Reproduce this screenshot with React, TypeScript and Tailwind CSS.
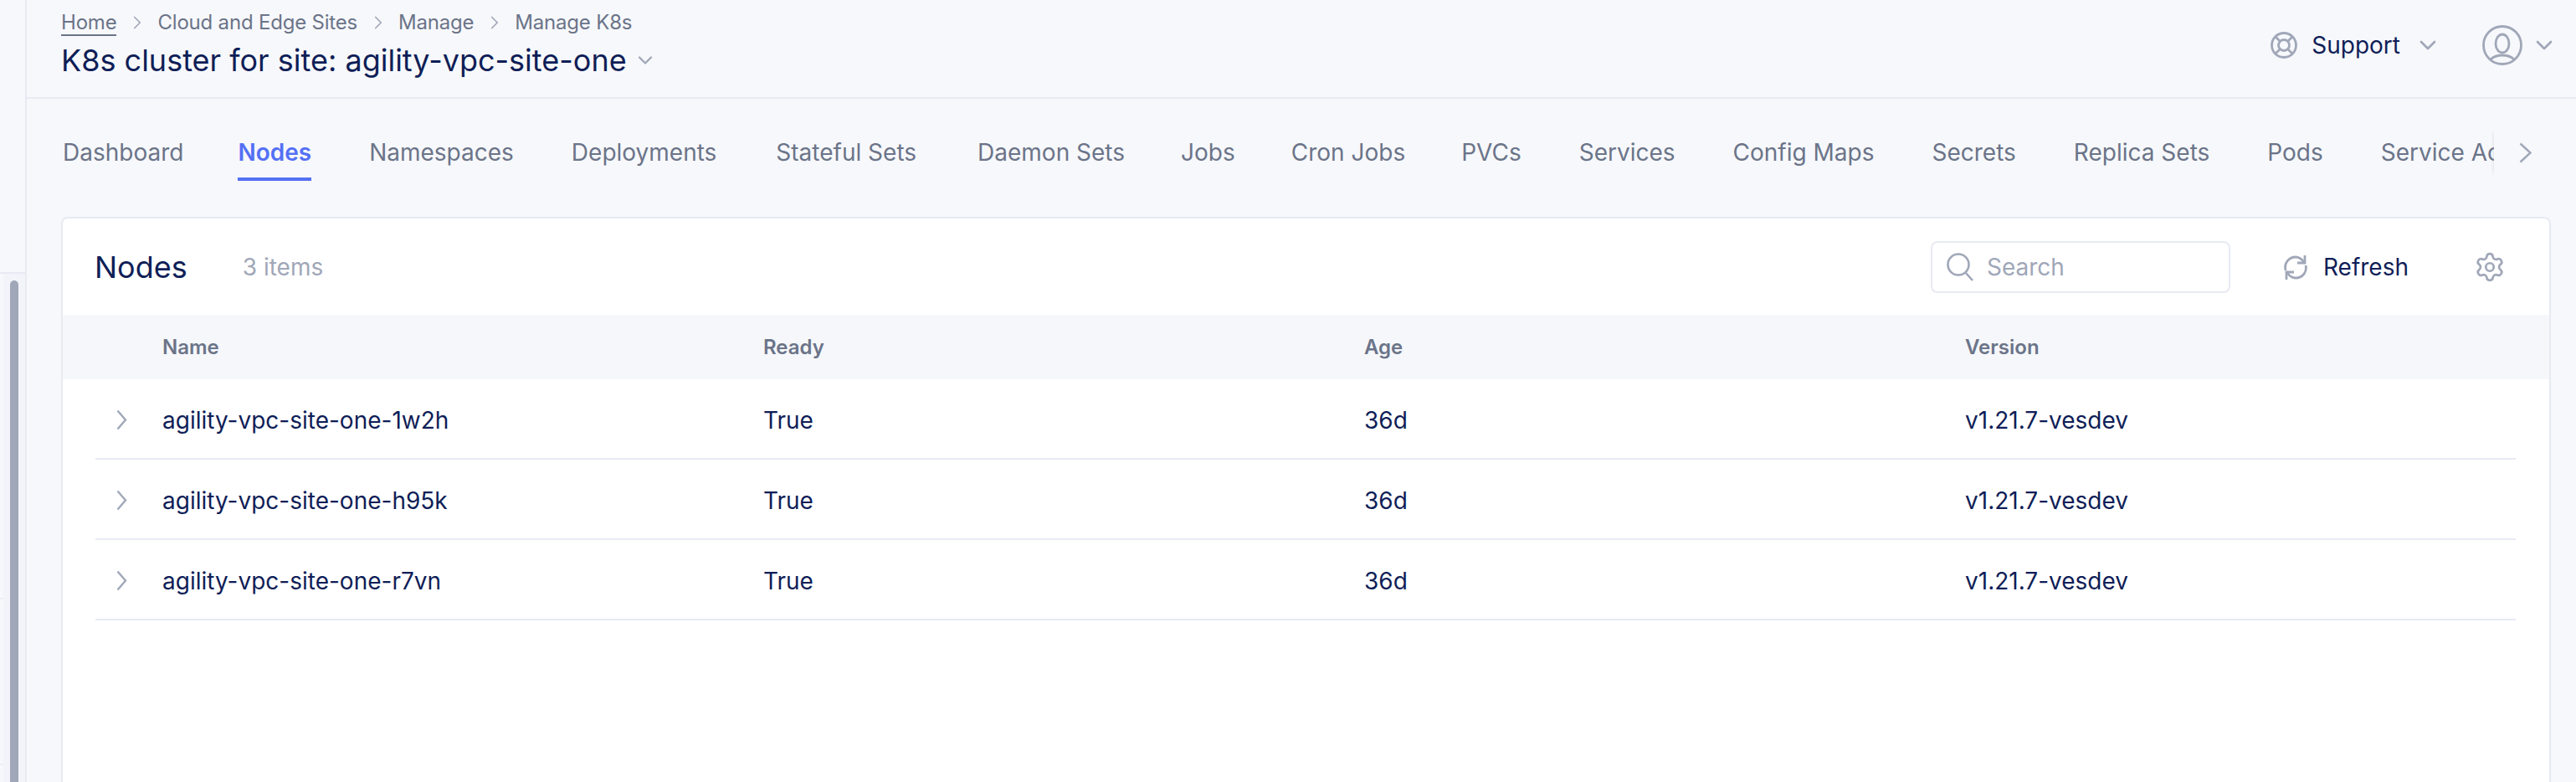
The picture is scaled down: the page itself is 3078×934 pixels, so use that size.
import React from "react";
import { ChevronDown, ChevronRight, Settings } from "lucide-react";

// spacing in the tab strip isn't even in the original, hence the per-tab nudges
const tabs = [
  { label: "Dashboard", nudge: "-mr-[4px]" },
  { label: "Nodes", nudge: "" },
  { label: "Namespaces", nudge: "" },
  { label: "Deployments", nudge: "" },
  { label: "Stateful Sets", nudge: "ml-[2px]" },
  { label: "Daemon Sets", nudge: "ml-[4px]" },
  { label: "Jobs", nudge: "-ml-[2px]" },
  { label: "Cron Jobs", nudge: "-ml-[2px]" },
  { label: "PVCs", nudge: "-ml-[2px]" },
  { label: "Services", nudge: "" },
  { label: "Config Maps", nudge: "" },
  { label: "Secrets", nudge: "" },
  { label: "Replica Sets", nudge: "" },
  { label: "Pods", nudge: "" },
  { label: "Service Accounts", nudge: "" },
];

const crumbs = ["Cloud and Edge Sites", "Manage", "Manage K8s"];

const nodes = ["agility-vpc-site-one-1w2h", "agility-vpc-site-one-h95k", "agility-vpc-site-one-r7vn"];

function Sidebar() {
  return (
    <aside className="w-[32px] shrink-0 h-full border-r-2 border-[#e8eaf3] flex flex-col">
      <div className="h-[327px] shrink-0 border-b-2 border-[#e8eaf3]" />
      <div className="flex-1 min-h-0 flex">
        <div className="w-[4px] shrink-0">
          <div className="h-[389px] border-b-2 border-[#eceef5]" />
          <div className="h-[198px] border-b-2 border-[#eceef5]" />
        </div>
        <div className="flex-1 bg-[#f3f4fa] pl-[8px] pt-[8px]">
          <div className="w-[10px] h-full rounded-t-full bg-[#a0a7b8]" />
        </div>
      </div>
    </aside>
  );
}

function Header() {
  return (
    <header className="h-[118px] shrink-0 border-b-2 border-[#e8eaf3] flex justify-between pl-[41px] pr-[22px]">
      <div className="pt-[11px]">
        <nav className="flex items-center text-[24px] leading-[32px] tracking-[-0.2px] text-[#6b7489]">
          <a className="border-b-2 border-[#6b7489] leading-[28px] mt-[2px]">Home</a>
          {crumbs.map((c) => (
            <React.Fragment key={c}>
              <ChevronRight className="w-[26px] h-[26px] mx-[11.5px] text-[#a0a7b8]" strokeWidth={1.6} />
              <span>{c}</span>
            </React.Fragment>
          ))}
        </nav>
        <div className="flex items-center mt-[5px]">
          <h1 className="text-[36px] leading-[48px] text-[#0f1e57]">K8s cluster for site: agility-vpc-site-one</h1>
          <ChevronDown className="w-[28px] h-[28px] ml-[8px] text-[#a0a7b8]" strokeWidth={2} />
        </div>
      </div>
      <div className="flex items-center pb-[8px]">
        <svg width="32" height="32" viewBox="0 0 32 32" fill="none" stroke="#a0a7b8" strokeWidth="2.8">
          <circle cx="16" cy="16" r="14.5" />
          <circle cx="16" cy="16" r="6.5" />
          <path d="M6 6l5.500 5.500M26 6l-5.500 5.500M6 26l5.500-5.500M26 26l-5.500-5.500" />
        </svg>
        <span className="text-[28px] leading-[40px] text-[#0f1e57] ml-[17px]">Support</span>
        <ChevronDown className="w-[32px] h-[32px] ml-[17px] text-[#a0a7b8]" strokeWidth={2} />
        <svg className="ml-[49px]" width="48" height="48" viewBox="0 0 48 48" fill="none" stroke="#a0a7b8" strokeWidth="2.8">
          <circle cx="24" cy="24" r="22.500" />
          <ellipse cx="24" cy="22" rx="8" ry="11" />
          <path d="M10 41c4-4 9-5 14-5s10 1 14 5" />
        </svg>
        <ChevronDown className="w-[32px] h-[32px] ml-[10px] text-[#a0a7b8]" strokeWidth={2} />
      </div>
    </header>
  );
}

function Tabs() {
  return (
    <div className="h-[98px] shrink-0 flex items-stretch pl-[43px] pr-[32px]">
      <div className="flex-1 min-w-0 overflow-hidden flex gap-[69px] whitespace-nowrap">
        {tabs.map((t) => (
          <div
            key={t.label}
            className={
              t.label === "Nodes"
                ? "h-[98px] pt-[46px] text-[28px] leading-[36px] font-semibold text-[#5470f5] relative"
                : `h-[98px] pt-[46px] text-[28px] leading-[36px] text-[#6b7489] ${t.nudge}`
            }
          >
            {t.label}
            {t.label === "Nodes" && <div className="absolute left-0 right-0 top-[94px] h-[4px] bg-[#5470f5]" />}
          </div>
        ))}
      </div>
      <div className="w-[66px] h-[55px] mt-[37px] shrink-0 flex items-center pl-[30px] shadow-[-3px_0_4px_-3px_rgba(160,167,184,0.4)]">
        <svg width="15" height="25" viewBox="0 0 15 25" fill="none" stroke="#a0a7b8" strokeWidth="2.4">
          <path d="M1.500 1.500l12 11-12 11" />
        </svg>
      </div>
    </div>
  );
}

function Card() {
  return (
    <section className="ml-[41px] mr-[30px] mt-[43px] flex-1 bg-white border-2 border-b-0 border-[#e8eaf3] rounded-t-[8px]">
      <div className="h-[115px] flex items-center pl-[38px] pr-[52px]">
        <h2 className="text-[36px] leading-[48px] text-[#0f1e57]">Nodes</h2>
        <span className="text-[28px] leading-[36px] text-[#a0a7b8] ml-[66px]">3 items</span>
        <div className="ml-auto w-[358px] h-[62px] border-2 border-[#e8eaf3] rounded-[8px] flex items-center pl-[16px]">
          <svg width="34" height="34" viewBox="0 0 34 34" fill="none" stroke="#a0a7b8" strokeWidth="2.6">
            <circle cx="15" cy="14" r="12.500" />
            <path d="M24 24l8 9" />
          </svg>
          <span className="text-[28px] leading-[36px] text-[#a0a7b8] ml-[15px]">Search</span>
        </div>
        <svg className="ml-[63px]" width="30" height="32" viewBox="0 0 30 32" fill="none" stroke="#a0a7b8" strokeWidth="2.800">
          <path d="M3 20C1 11 7 4 15 4c4 0 7 2 10 6" />
          <path d="M26 2v9h-9" />
          <path d="M27 14c2 8-4 15-12 15-4 0-7-2-10-6" />
          <path d="M4 31v-9h9" />
        </svg>
        <span className="text-[28px] leading-[36px] text-[#0f1e57] ml-[18px]">Refresh</span>
        <Settings className="w-[38px] h-[38px] ml-[78px] text-[#a0a7b8]" strokeWidth={1.7} />
      </div>
      <div className="h-[77px] bg-[#f6f7fa] grid grid-cols-[718px_718px_718px_1fr] items-center pl-[119px] text-[24px] leading-[32px] font-semibold text-[#6b7489]">
        <span>Name</span>
        <span>Ready</span>
        <span>Age</span>
        <span>Version</span>
      </div>
      <div className="ml-[39px] mr-[40px]">
        {nodes.map((n) => (
          <div
            key={n}
            className="h-[96px] border-b-2 border-[#e8eaf3] grid grid-cols-[718px_718px_718px_1fr] items-center pl-[80px] pt-[4px] relative text-[28px] leading-[36px] text-[#0f1e57]"
          >
            <svg className="absolute left-[25px] top-[36px]" width="13" height="25" viewBox="0 0 13 25" fill="none" stroke="#a0a7b8" strokeWidth="2.400">
              <path d="M1.500 1.500l9.500 11-9.500 11" />
            </svg>
            <span>{n}</span>
            <span>True</span>
            <span>36d</span>
            <span>v1.21.7-vesdev</span>
          </div>
        ))}
      </div>
    </section>
  );
}

export default function App() {
  return (
    <div className="w-[3078px] h-[934px] overflow-hidden flex bg-[#f7f8fb] font-['Inter',sans-serif]">
      <Sidebar />
      <main className="flex-1 min-w-0 flex flex-col">
        <Header />
        <Tabs />
        <Card />
      </main>
    </div>
  );
}
